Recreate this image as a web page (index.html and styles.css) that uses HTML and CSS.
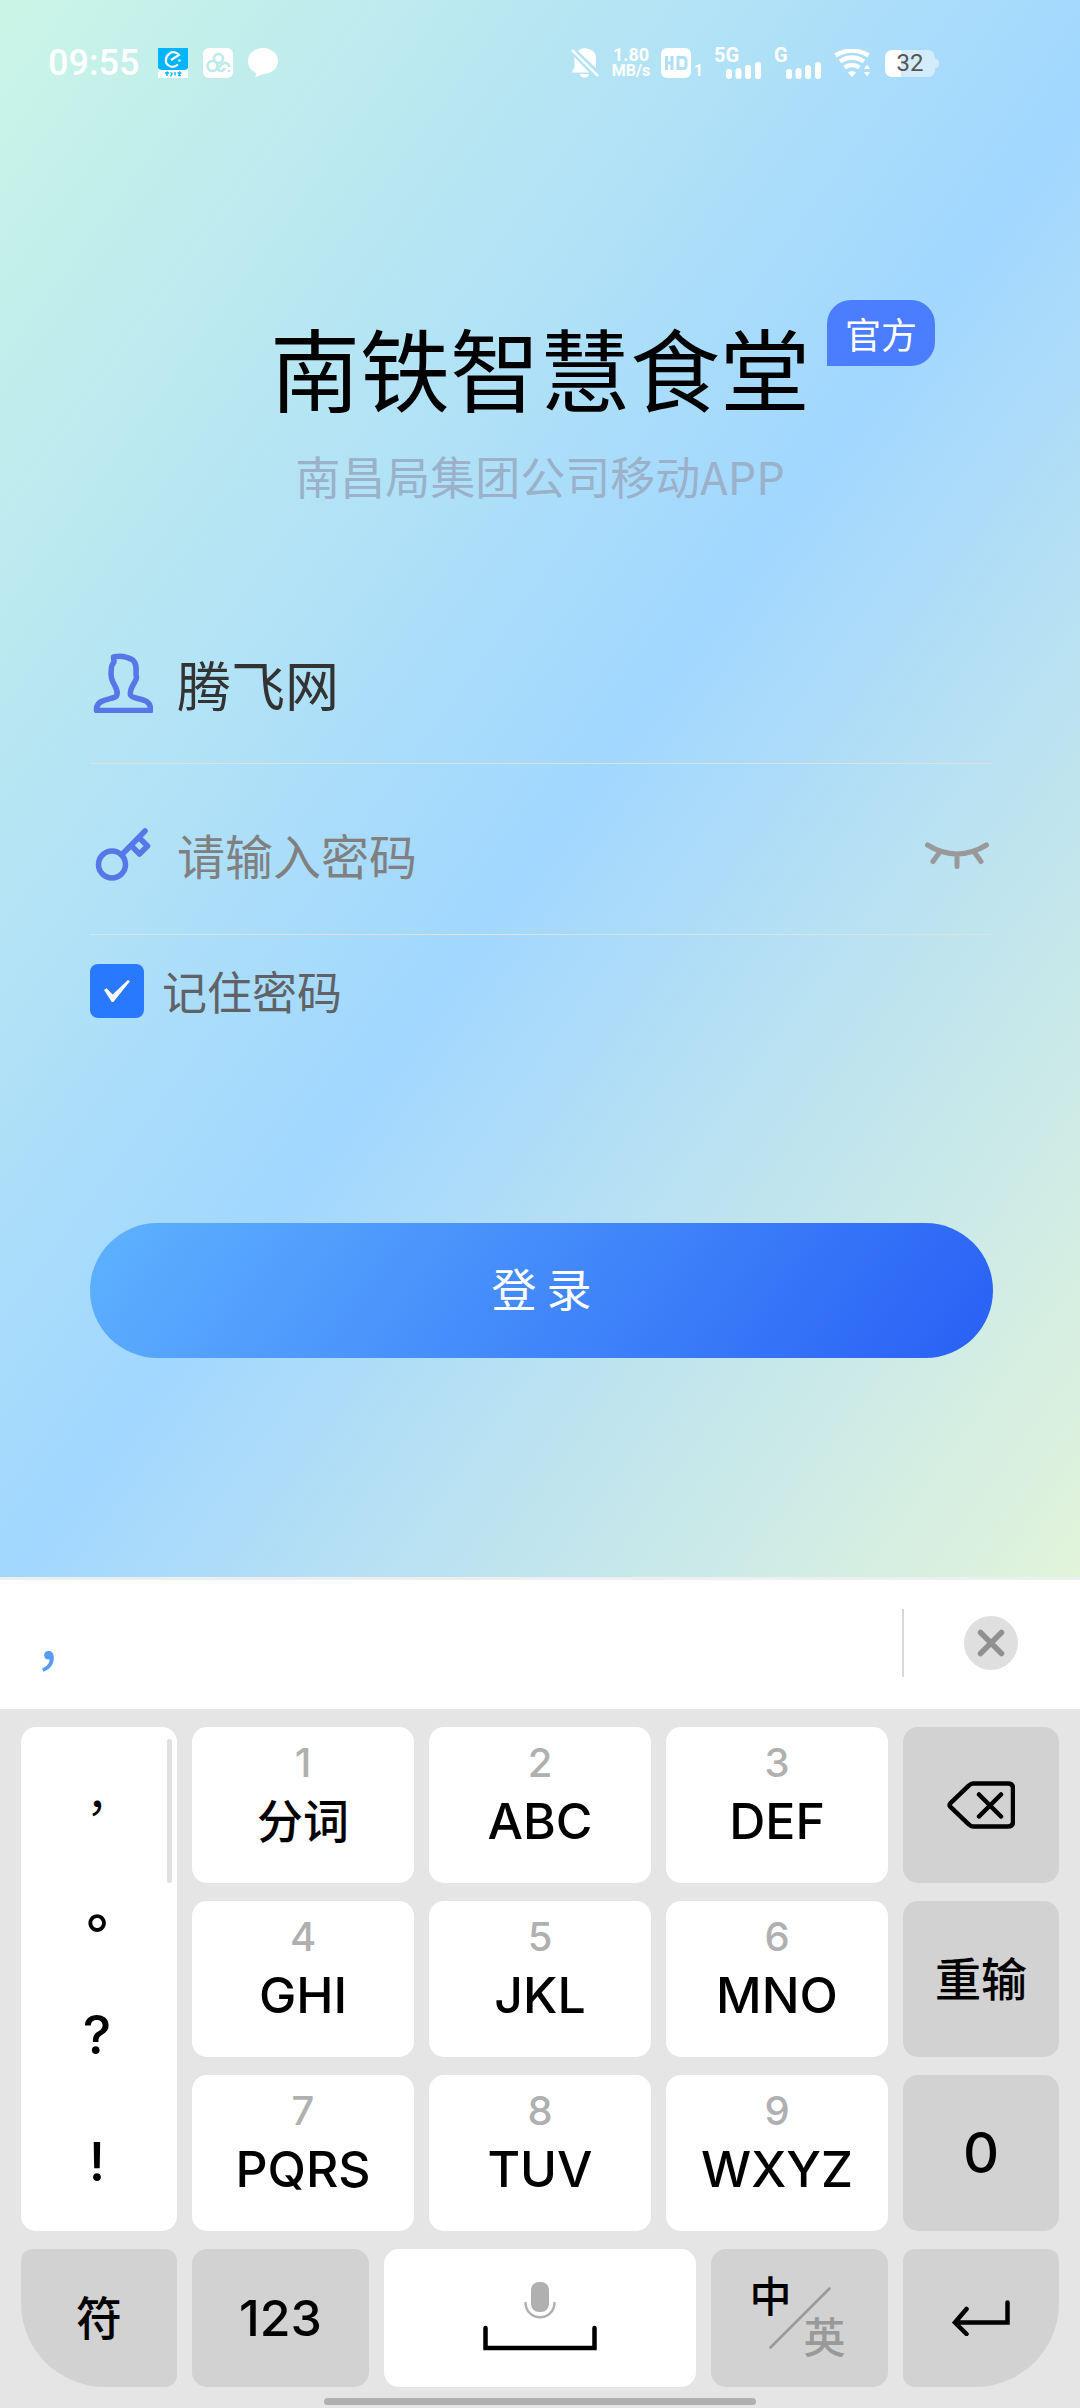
FILE: index.html
```html
<!DOCTYPE html>
<html lang="zh-CN">
<head>
<meta charset="utf-8">
<meta name="viewport" content="width=device-width, initial-scale=1">
<title>南铁智慧食堂</title>
<link rel="stylesheet" href="styles.css">
</head>
<body>
<main class="login">
  <header class="status">
    <div class="status-left">
      <time class="clock">09:55</time>
      <svg class="app-icon" viewBox="0 0 30 30" aria-hidden="true">
        <rect width="30" height="30" fill="#fff"/>
        <path d="M0 0h30v20q-1 2-4 2H4q-3 0-4-2z" fill="#00b4fe"/>
        <path d="M13 12l8-5c-2-3-7-4-10-1-4 3-4 9-1 11 3 2.500 7 2 10-.5" fill="none" stroke="#fff" stroke-width="2.200"/>
        <circle cx="21.500" cy="12.500" r="1.300" fill="#fff"/>
        <path d="M7 25h4M9 23.500v4.500M12.500 24.500l1.500 1-1.500 3M17 24v3.500M19.500 25h4M20 27.500h3M21.500 23.500v4" stroke="#00b4fe" stroke-width="1.400" fill="none"/>
      </svg>
      <svg class="app-icon" viewBox="0 0 30 30" aria-hidden="true">
        <rect width="30" height="30" rx="6" fill="#fff"/>
        <g fill="none" stroke="#bcebe9" stroke-width="2.600">
          <circle cx="15.500" cy="10.500" r="4.500"/>
          <path d="M22 20c-3 5-6 3-9 0"/>
          <circle cx="9.500" cy="18" r="5"/>
          <path d="M12 22c5-1 6-8 11-7 2 .5 3.500 2 3.500 4"/>
        </g>
        <circle cx="26" cy="23" r="1.300" fill="#bcebe9"/>
      </svg>
      <svg class="app-icon" viewBox="0 0 30 30" aria-hidden="true">
        <path d="M15 0c8.500 0 15 5.500 15 13s-6.500 13-15 13c-2.500 1-5 2-7.500 3.500L8 25C3 22.500 0 18.500 0 13 0 5.500 6.500 0 15 0z" fill="#fff"/>
      </svg>
    </div>
    <div class="status-right">
      <svg class="bell" viewBox="0 0 28 30" aria-hidden="true">
        <path d="M3.500 9L18 24.500H1.500v-2L3.500 20zM7 3c1.500-1.500 3.500-2.500 6-3 6 0 12 3.500 12 10v10zM9 26h9c-.5 5-8.500 5-9 0z" fill="#fff"/>
        <path d="M1 2l26 26" stroke="#fff" stroke-width="2.400"/>
      </svg>
      <div class="speed"><span>1.80</span><span>MB/s</span></div>
      <div class="hd">
        <svg width="30" height="30" viewBox="0 0 30 30" aria-hidden="true">
          <rect width="30" height="30" rx="6" fill="#fff"/>
          <path d="M5.500 8v14M11 8v14M5.500 15H11M17 9.500h5q3 0 3 3v5q0 3-3 3h-5z" fill="none" stroke="#afe0f5" stroke-width="3"/>
        </svg>
        <span>1</span>
      </div>
      <div class="signal">
        <span>5G</span>
        <svg width="35" height="17" viewBox="0 0 35 17" aria-hidden="true"><path d="M3 10v4M12.500 9v5M22 6v8M32 3v11" stroke="#fff" stroke-width="6" stroke-linecap="round"/></svg>
      </div>
      <div class="signal">
        <span>G</span>
        <svg width="35" height="17" viewBox="0 0 35 17" aria-hidden="true"><path d="M3 10v4M12.500 9v5M22 6v8M32 3v11" stroke="#fff" stroke-width="6" stroke-linecap="round"/></svg>
      </div>
      <svg class="wifi" viewBox="0 0 36 28" aria-hidden="true">
        <path d="M1.500 6.500q16.500-10 33 0M6 12.500q12-8 24 0M10.500 18.500q7.500-5 15 0" fill="none" stroke="#fff" stroke-width="4.500"/>
        <path d="M14 23.500q4-3 8 0l-4 4.500zM30 20l3-4.500 3 4.500zM30 23l3 4.500 3-4.500z" fill="#fff"/>
      </svg>
      <div class="battery"><span>32</span></div>
    </div>
  </header>

  <div class="brand">
    <h1 class="title">南铁智慧食堂<span class="badge">官方</span></h1>
    <p class="subtitle">南昌局集团公司移动APP</p>
  </div>

  <form class="form">
    <div class="field">
      <label for="user" aria-label="用户名">
        <svg class="field-icon" viewBox="0 0 60 60" aria-hidden="true">
          <path d="M20.500 4c6-1.500 13-.5 18.500 2.500 4 2.500 4.500 7 4 14.500l.5 4c-1 5-7.500 10-6 17 2 5 19 2 20 13v2.500h-54V55c2-10 16-8 20-12 3-6-4-12-5-18l-.5-4c.5-6-.5-8 3-12z" fill="none" stroke="#5577e8" stroke-width="5.500" stroke-linejoin="round"/>
        </svg>
      </label>
      <input id="user" class="field-input user" type="text" value="腾飞网">
    </div>
    <div class="field">
      <label for="pass" aria-label="密码">
        <svg class="field-icon" viewBox="0 0 60 60" aria-hidden="true">
          <g fill="none" stroke="#5577e8" stroke-width="5.500" stroke-linecap="round" stroke-linejoin="round">
            <circle cx="19" cy="40.500" r="13.500"/>
            <path d="M29.500 30L52 7M46 13.500l8.500 8.500-8 8-8-8"/>
          </g>
        </svg>
      </label>
      <input id="pass" class="field-input" type="password" placeholder="请输入密码">
      <button class="eye" type="button" aria-label="显示密码">
        <svg width="64" height="28" viewBox="0 0 64 28" aria-hidden="true">
          <path d="M2.500 3q29.500 18 59 0M14 11L8 19.500M32 13v11.500M50 11l6 8.500" fill="none" stroke="#999" stroke-width="5" stroke-linecap="round"/>
        </svg>
      </button>
    </div>
    <label class="remember"><input type="checkbox" checked><span>记住密码</span></label>
    <button class="submit" type="button">登 录</button>
  </form>
</main>

<section class="keyboard">
  <div class="candidates">
    <button class="candidate" type="button">，</button>
    <button class="close" type="button" aria-label="关闭">
      <svg width="54" height="54" viewBox="0 0 54 54" aria-hidden="true"><circle cx="27" cy="27" r="27" fill="#dfdfdf"/><path d="M16.500 16.500l21 21M37.500 16.500l-21 21" stroke="#909090" stroke-width="5.500" stroke-linecap="round"/></svg>
    </button>
  </div>
  <div class="keys">
    <div class="marks">
      <button class="comma" type="button">，</button>
      <button class="stop" type="button">。</button>
      <button class="question" type="button">?</button>
      <button type="button">!</button>
    </div>
    <button class="key" type="button"><small>1</small><b class="han">分词</b></button>
    <button class="key" type="button"><small>2</small><b>ABC</b></button>
    <button class="key" type="button"><small>3</small><b>DEF</b></button>
    <button class="key gray" type="button" aria-label="删除">
      <svg width="68" height="48" viewBox="0 0 68 48" aria-hidden="true"><path d="M26 2.500h35q5 0 5 5v33q0 5-5 5H26q-2 0-4-2L3.500 26q-2-2 0-4L22 4.500q2-2 4-2zM32 13.500l22 22M54 13.500l-22 22" fill="none" stroke="#000" stroke-width="4.500" stroke-linecap="round"/></svg>
    </button>
    <button class="key" type="button"><small>4</small><b>GHI</b></button>
    <button class="key" type="button"><small>5</small><b>JKL</b></button>
    <button class="key" type="button"><small>6</small><b>MNO</b></button>
    <button class="key gray han" type="button">重输</button>
    <button class="key" type="button"><small>7</small><b>PQRS</b></button>
    <button class="key" type="button"><small>8</small><b>TUV</b></button>
    <button class="key" type="button"><small>9</small><b>WXYZ</b></button>
    <button class="key gray zero" type="button">0</button>
  </div>
  <div class="keys-bottom">
    <button class="key gray han corner-left" type="button">符</button>
    <button class="key gray" type="button">123</button>
    <button class="key" type="button" aria-label="空格">
      <svg width="114" height="74" viewBox="0 0 114 74" aria-hidden="true">
        <rect x="48" y="1" width="18" height="30" rx="8" fill="#b0b0b0"/>
        <path d="M42.500 22c1 19 28 19 29 0" fill="none" stroke="#b0b0b0" stroke-width="2.500" stroke-linecap="round"/>
        <path d="M2.500 47v20h109V47" fill="none" stroke="#000" stroke-width="4.500" stroke-linecap="round"/>
      </svg>
    </button>
    <button class="key gray lang" type="button">
      <span>中</span>
      <svg width="62" height="62" viewBox="0 0 62 62" aria-hidden="true"><path d="M1.500 60.500l59-59" stroke="#999" stroke-width="2.500" stroke-linecap="round"/></svg>
      <span class="muted">英</span>
    </button>
    <button class="key gray corner-right" type="button" aria-label="回车">
      <svg width="58" height="36" viewBox="0 0 58 36" aria-hidden="true"><path d="M55.500 2.500v20H3M14.500 9L3 22.500 14.500 34" fill="none" stroke="#000" stroke-width="4.500" stroke-linecap="round"/></svg>
    </button>
  </div>
  <div class="home-bar"></div>
</section>
</body>
</html>
```
FILE: styles.css
```css
* { box-sizing: border-box; }
body {
  margin: 0;
  min-height: 100vh;
  display: flex;
  flex-direction: column;
  font-family: "Noto Sans CJK SC", sans-serif;
}
button, input { font: inherit; color: inherit; border: 0; padding: 0; margin: 0; background: none; }
svg { display: block; flex: none; }

.login {
  flex: 1;
  background: linear-gradient(126deg, #cbf5e6 0%, #a2d7ff 52%, #e2f4da 100%);
}

/* status bar */
.status {
  height: 126px;
  padding: 0 145px 0 48px;
  display: flex;
  justify-content: space-between;
  align-items: center;
  color: #fff;
  font-family: Roboto, sans-serif;
}
.status-left { display: flex; align-items: center; gap: 15px; }
.clock { font-size: 36px; font-weight: 500; margin-right: 4px; }
.app-icon { width: 30px; height: 30px; }
.status-right { display: flex; align-items: center; }
.bell { width: 28px; height: 30px; margin-right: 13px; }
.speed {
  display: flex;
  flex-direction: column;
  align-items: center;
  width: 38px;
  margin-right: 11px;
  font-size: 16px;
  font-weight: 700;
  line-height: 16px;
}
.speed span:first-child { font-size: 18px; }
.hd { display: flex; align-items: flex-end; gap: 3px; width: 53px; font-size: 16px; font-weight: 700; line-height: 14px; }
.signal {
  display: flex;
  flex-direction: column;
  width: 60px;
  font-size: 20px;
  font-weight: 700;
  line-height: 14px;
}
.signal svg { align-self: flex-start; margin-left: 12px; }
.battery {
  width: 50px;
  height: 27px;
  margin-left: 15px;
  border-radius: 7px;
  background: linear-gradient(90deg, #fff 32%, #d3ecfb 32%);
  color: #555;
  font-size: 24px;
  line-height: 27px;
  text-align: center;
  position: relative;
}
.battery::after {
  content: "";
  position: absolute;
  left: 100%;
  top: 9px;
  width: 4px;
  height: 9px;
  border-radius: 0 4px 4px 0;
  background: #d3ecfb;
}
.wifi { width: 36px; height: 28px; }

/* brand */
.brand { padding-top: 180px; text-align: center; }
.title {
  display: inline-block;
  position: relative;
  margin: 0;
  font-size: 90px;
  line-height: 120px;
  font-weight: 400;
  color: #000;
}
.badge {
  position: absolute;
  left: calc(100% + 17px);
  top: -6px;
  padding: 0 18px;
  border-radius: 24px 24px 24px 0;
  background: #4a7dff;
  color: #fff;
  font-size: 36px;
  line-height: 66px;
  white-space: nowrap;
}
.subtitle { margin: 20px 0 0; font-size: 45px; line-height: 60px; color: #9ab1c9; }

/* form */
.form { padding: 87px 87px 0 90px; }
.field {
  display: flex;
  align-items: center;
  height: 171px;
  padding: 10px 4px 0 3px;
  border-bottom: 1px solid #dbe2e4;
}
.field-icon { width: 60px; height: 60px; }
.field-input {
  flex: 1;
  min-width: 0;
  height: 90px;
  margin-left: 24px;
  font-size: 48px;
  outline: 0;
}
.field-input.user { font-size: 54px; color: #333; }
.field-input::placeholder { color: #808080; opacity: 1; }
.eye { padding-top: 4px; }
.remember {
  display: flex;
  align-items: center;
  gap: 18px;
  height: 54px;
  margin-top: 29px;
  font-size: 45px;
  line-height: 54px;
  color: #606266;
}
.remember input {
  appearance: none;
  width: 54px;
  height: 54px;
  border-radius: 8px;
  background: #2979ff;
  display: grid;
  place-items: center;
}
.remember input:checked::after {
  content: "";
  width: 26px;
  height: 22px;
  background: #fff;
  clip-path: polygon(0 45%, 10% 38%, 33% 66%, 92% 0, 100% 6%, 36% 100%, 30% 100%);
}
.submit {
  display: block;
  width: 100%;
  height: 135px;
  margin-top: 205px;
  padding-bottom: 6px;
  border-radius: 68px;
  background: linear-gradient(126deg, #5eb2ff, #2860f5);
  color: #fff;
  font-size: 45px;
}

/* keyboard */
.keyboard { background: #e5e5e5; color: #000; }
.candidates {
  height: 132px;
  padding-bottom: 4px;
  border-top: 3px solid #eceff0;
  background: #fff;
  display: flex;
  align-items: center;
  justify-content: space-between;
}
.candidate { width: 132px; padding: 0 0 8px 34px; text-align: left; font-size: 60px; color: #5b9bf5; }
.close {
  width: 178px;
  height: 68px;
  border-left: 2px solid #d8d8d8;
  display: grid;
  place-items: center;
  padding-right: 2px;
}
.keys {
  display: grid;
  grid-template-columns: 156fr 222fr 222fr 222fr 156fr;
  grid-template-rows: repeat(3, 156px);
  gap: 18px 15px;
  padding: 18px 21px;
}
.marks {
  grid-row: 1 / 4;
  position: relative;
  display: grid;
  grid-template-rows: repeat(4, 1fr);
  padding: 20px 4px 10px 0;
  border-radius: 15px;
  background: #fff;
}
.marks button { font-family: Inter, "Noto Sans CJK TC", sans-serif; font-size: 54px; font-weight: 500; line-height: 60px; }
.marks .comma { font-size: 45px; font-weight: 400; padding-top: 6px; }
.marks .stop { font-weight: 700; }
.marks .question { padding-bottom: 16px; }
.marks::after {
  content: "";
  position: absolute;
  right: 5px;
  top: 12px;
  width: 5px;
  height: 144px;
  border-radius: 2px;
  background: #e0e0e4;
}
.key {
  display: flex;
  flex-direction: column;
  align-items: center;
  justify-content: center;
  border-radius: 15px;
  background: #fff;
  font-family: Inter, "Noto Sans CJK SC", sans-serif;
  font-size: 50px;
  font-weight: 500;
  line-height: 60px;
}
.key small { font-size: 40px; line-height: 44px; color: #b0b0b0; margin-bottom: 6px; }
.key b { font-weight: 500; margin-bottom: 18px; }
.key.gray { background: #d2d2d2; }
.han, .key.han { font-size: 46px; }
.key.zero { font-size: 56px; }
.keys-bottom {
  display: grid;
  grid-template-columns: 156fr 177fr 312fr 177fr 156fr;
  grid-template-rows: 138px;
  gap: 15px;
  padding: 0 21px;
}
.corner-left { border-radius: 12px 12px 12px 84px; }
.corner-right { border-radius: 12px 12px 84px 12px; }
.lang { display: grid; grid-template: 1fr / 1fr; place-items: center; font-size: 42px; }
.lang > * { grid-area: 1 / 1; }
.lang span { margin: 0 58px 42px 0; }
.lang span.muted { margin: 40px 0 0 50px; color: #999; }
.home-bar { width: 40%; height: 7px; margin: 11px auto 3px; border-radius: 4px; background: #b0b0b0; }
```
